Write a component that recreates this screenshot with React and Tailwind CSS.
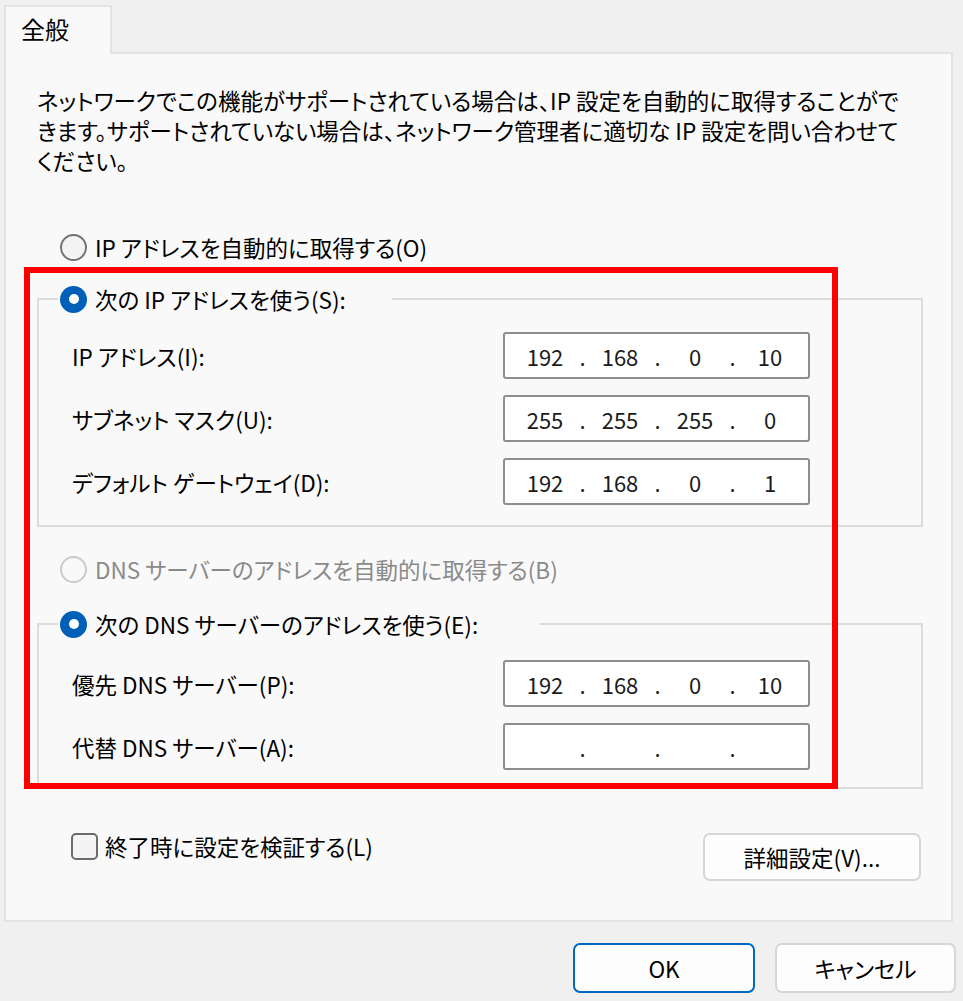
import React, { Fragment } from 'react';

function Radio({ checked, disabled }) {
    if (checked) {
        return (
            <span className="w-[27px] h-[27px] rounded-full bg-[#005fb8] flex items-center justify-center shrink-0">
                <span className="w-[10px] h-[10px] rounded-full bg-white" />
            </span>
        );
    }
    return (
        <span
            className={
                disabled
                    ? 'w-[27px] h-[27px] rounded-full border-2 border-[#cacaca] bg-[#f9f9f9] shrink-0'
                    : 'w-[27px] h-[27px] rounded-full border-2 border-[#707070] bg-[#f3f3f3] shrink-0'
            }
        />
    );
}

function IpBox({ parts }) {
    return (
        <div className="w-[307px] h-[47px] bg-white border-2 border-[#8e8e8e] rounded-[3px] flex items-center pl-[10px] text-[22px] text-[#1b1b1b]">
            {parts.map((p, i) => (
                <Fragment key={i}>
                    <span className="w-[60px] text-center">{p}</span>
                    {i < 3 && <span className="w-[15px] text-center">.</span>}
                </Fragment>
            ))}
        </div>
    );
}

function Row({ label, parts }) {
    return (
        <div className="flex items-center">
            <span className="w-[431px]">{label}</span>
            <IpBox parts={parts} />
        </div>
    );
}

export default function App() {
    return (
        <div className="relative w-[963px] h-[1001px] bg-[#f0f0f0] pt-[5px] text-[22.5px] leading-[30px] text-black font-['Noto_Sans_CJK_JP','Noto_Sans',sans-serif] [font-feature-settings:'palt']">
            {/* Tab */}
            <div className="pl-[4px] flex">
                <div className="relative z-10 -mb-[2px] w-[108px] h-[49px] bg-[#f9f9f9] border-2 border-b-0 border-[#e3e3e3] pl-[15px] pt-[7px] text-[24px]">
                    全般
                </div>
            </div>

            {/* Panel */}
            <div className="ml-[4px] w-[949px] h-[870px] border-2 border-[#e3e3e3] bg-[#f9f9f9]">
                <p className="pl-[31px] pt-[31px] whitespace-nowrap">
                    ネットワークでこの機能がサポートされている場合は、IP 設定を自動的に取得することがで<br />
                    きます。サポートされていない場合は、ネットワーク管理者に適切な IP 設定を問い合わせて<br />
                    ください。
                </p>

                <div className="mt-[57px] ml-[54px] flex items-center gap-[8px] h-[30px]">
                    <Radio />
                    <span>IP アドレスを自動的に取得する(O)</span>
                </div>

                <fieldset className="mt-[22px] ml-[31px] w-[886px] border-2 border-[#dcdcdc]">
                    <legend className="ml-[19px] w-[334px] pl-[2px] h-[30px] flex items-center gap-[8px]">
                        <Radio checked />
                        <span>次の IP アドレスを使う(S):</span>
                    </legend>
                    <div className="pl-[33px] pt-[18px] pb-[20px] flex flex-col gap-[16px]">
                        <Row label="IP アドレス(I):" parts={['192', '168', '0', '10']} />
                        <Row label="サブネット マスク(U):" parts={['255', '255', '255', '0']} />
                        <Row label="デフォルト ゲートウェイ(D):" parts={['192', '168', '0', '1']} />
                    </div>
                </fieldset>

                <div className="mt-[27px] ml-[54px] flex items-center gap-[8px] h-[30px] text-[#8a8a8a]">
                    <Radio disabled />
                    <span>DNS サーバーのアドレスを自動的に取得する(B)</span>
                </div>

                <fieldset className="mt-[25px] ml-[31px] w-[886px] border-2 border-[#dcdcdc]">
                    <legend className="ml-[19px] w-[482px] pl-[2px] h-[30px] flex items-center gap-[8px]">
                        <Radio checked />
                        <span>次の DNS サーバーのアドレスを使う(E):</span>
                    </legend>
                    <div className="pl-[33px] pt-[21px] pb-[17px] flex flex-col gap-[16px]">
                        <Row label="優先 DNS サーバー(P):" parts={['192', '168', '0', '10']} />
                        <Row label="代替 DNS サーバー(A):" parts={['', '', '', '']} />
                    </div>
                </fieldset>

                <div className="mt-[42px] flex justify-between items-start pr-[30px]">
                    <div className="ml-[65px] h-[30px] flex items-center gap-[7px]">
                        <span className="w-[27px] h-[27px] rounded-[5px] border-2 border-[#6b6b6b] bg-[#f4f4f4]" />
                        <span>終了時に設定を検証する(L)</span>
                    </div>
                    <button className="mt-[2px] w-[218px] h-[48px] rounded-[7px] border-2 border-[#d6d6d6] bg-[#fdfdfd] flex items-center justify-center">
                        詳細設定(V)...
                    </button>
                </div>
            </div>

            {/* Footer buttons */}
            <div className="mt-[21px] flex justify-end gap-[20px] pr-[7px]">
                <button className="w-[182px] h-[50px] rounded-[7px] border-2 border-[#0067c0] bg-[#fdfdfd] flex items-center justify-center">
                    OK
                </button>
                <button className="w-[181px] h-[50px] rounded-[7px] border-2 border-[#d6d6d6] bg-[#fdfdfd] flex items-center justify-center">
                    キャンセル
                </button>
            </div>

            {/* Red highlight */}
            <div className="absolute left-[24px] top-[267px] w-[814px] h-[522px] border-[6px] border-[#ff0000] pointer-events-none" />
        </div>
    );
}
